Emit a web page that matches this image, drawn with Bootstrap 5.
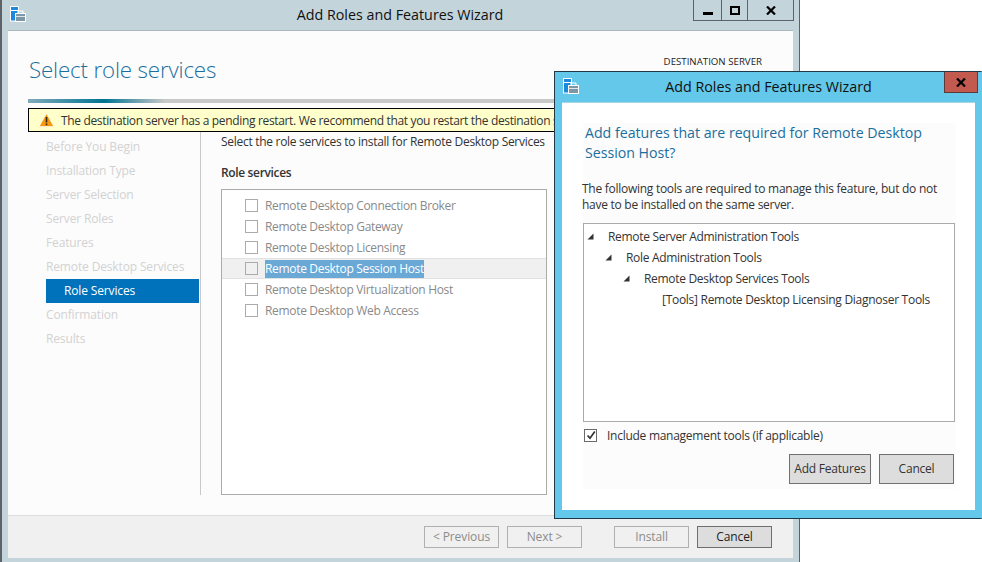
<!DOCTYPE html>
<html lang="en">
<head>
<meta charset="utf-8">
<title>Add Roles and Features Wizard</title>
<link href="https://cdn.jsdelivr.net/npm/bootstrap@5.3.0/dist/css/bootstrap.min.css" rel="stylesheet">
<style>
html,body{margin:0;height:100%;background:#fff;overflow:hidden}
body{font-family:"Open Sans","Noto Sans",sans-serif;font-size:12px;line-height:16px;color:#333;letter-spacing:-.34px}
.desk{position:relative;width:982px;height:562px;overflow:hidden}
.win-a{position:absolute;left:0;top:0;width:800px;height:562px;background:#c3d5db;border-left:2px solid #5c6268;border-right:1px solid #5c6268;padding:0 7px 4px 6px}
.win-b{position:absolute;left:554px;top:71px;width:428px;height:448px;background:#63c8ea;border:1px solid #1f3a46;border-right-color:#63c8ea;padding:0 6px 7px 7px}
.tbar-a{height:30px;position:relative;flex:none}
.tbar-b{height:30px;position:relative;flex:none}
.ttl{font-size:14.3px;line-height:30px;text-align:center;color:#111;letter-spacing:0}
.ico{position:absolute;left:2px;top:6px}
.tbar-b .ico{left:1px;top:6px}
.ctl{position:absolute;left:685px;top:0;height:21px;width:101px;border:1px solid #5c6268;border-top:0}
.ctl>span{display:flex;align-items:center;justify-content:center;height:100%;border-right:1px solid #5c6268}
.ctl>span:last-child{border-right:0}
.ctl-min{width:28px}
.ctl-max{width:26px}
.ctl-x{position:absolute;right:-3px;top:0;width:34px;height:21px;background:#c25a50;border:1px solid #5b3a3a;border-top:0}
.pane{width:785px;flex:1 1 auto;background:#fcfcfc;border-top:1px solid #a8b8be;min-height:0}
.pane-head{height:68px;padding-left:21px;padding-right:31px}
.heading{font-weight:300;font-size:22.3px;line-height:30px;color:#1a6f9e;letter-spacing:-.15px;padding-top:24px}
.dest{font-size:9.7px;line-height:12px;color:#222;padding-top:25px;letter-spacing:0}
.grad{height:4px;margin-left:20px;width:760px;background:linear-gradient(90deg,#7fabbc 0,#007392 10%,#c8c8c8 18%,#c8c8c8 100%)}
.warnbar{height:24px;margin:5px 0 0 20px;width:760px;background:#ffffcc;border:1px solid #000;padding-left:10px;white-space:nowrap;gap:7px}
.warnbar span{color:#333;padding-top:1px}
.cols{height:363px;margin-left:20px}
.steps{width:173px;border-right:1px solid #c9c9c9;padding:3px 0 0 18px;flex:none;letter-spacing:-.14px}
.step{height:24px;line-height:24px;color:#d2d2d2;white-space:nowrap}
.step-on{background:#0072bc;color:#fff;padding-left:18px;margin-right:1px}
.main-col{padding-left:20px;width:347px;flex:none}
.intro{height:18px;line-height:18px;margin-top:1px;white-space:nowrap;letter-spacing:-.29px}
.rs-lbl{font-weight:600;margin-top:13px;line-height:18px;height:18px;letter-spacing:-.35px}
.rs-box{height:306px;width:326px;border:1px solid #ababab;background:#fff;margin-top:7px;padding-top:5px;letter-spacing:-.32px}
.rs-row{height:21px;padding-left:23px;gap:7px;color:#8a8a8a;border:1px solid transparent;border-width:1px 0;white-space:nowrap}
.rs-row.pick{background:#f0f0f0;border-color:#e2e2e2}
.pick-t{background:#6aa8d6;color:#fff;padding:0;height:18px;line-height:17px}
.cb{width:13px;height:13px;border:1px solid #ababab;background:#fff;flex:none}
.pick .cb{background:#f0f0f0}
.cb-on{border-color:#6a6a6a;display:flex;align-items:center;justify-content:center}
.pane-foot{height:43px;flex:none;width:785px;background:#f0f0f0;border-top:1px solid #dcdcdc;padding-right:21px;padding-top:10px}
.wbtn{height:22px;width:75px;border:1px solid #b0b0b0;background:#f0f0f0;color:#8c8c8c;font-size:12px;line-height:18px;padding:0;letter-spacing:-.1px}
.wbtn-on{border-color:#6f6f6f;background:#dddddd;color:#222}
.gap-8{gap:8px}
.gap-32{margin-left:24px}
.d-pane{width:413px;height:408px;background:#fff;border-top:1px solid #a8d4e4;padding:20px 19px 0 21px}
.d-inner{background:#fcfcfc;height:366px;width:373px}
.d-h{font-size:14.2px;line-height:20px;color:#1a6f9e;padding:0 10px 0 2px;letter-spacing:-.02px}
.d-p{line-height:16px;margin-top:18px;margin-left:-1px;letter-spacing:-.27px}
.tree{height:199px;width:372px;margin-top:10px;background:#fff;border:1px solid #ababab;padding-top:2px;letter-spacing:-.31px}
.tr{height:21px;white-space:nowrap;color:#333}
.tw{width:20px;flex:none;display:flex;align-items:center;justify-content:center;padding-right:8px}
.tr-2{padding-left:18px}
.tr-3{padding-left:36px}
.tr-4{padding-left:78px;letter-spacing:-.28px}
.inc{height:14px;margin-top:6px;margin-left:1px;gap:10px;letter-spacing:-.27px}
.inc span:last-child{padding-top:1px}
.dbtns{margin-top:12px;padding-right:2px;gap:8px}
.dbtn{height:30px;border:1px solid #707070;background:#dddddd;color:#333;font-size:12px;padding:0;letter-spacing:-.22px}
.btn-add{width:82px}
.btn-can{width:75px}
.no-shrink{flex:none}
</style>
</head>
<body>
<div class="desk">
  <div class="win-a d-flex flex-column">
    <div class="tbar-a">
      <svg class="ico" width="17" height="16" viewBox="0 0 17 16"><rect x=".5" y=".5" width="8" height="14.500" fill="#1e88dd" stroke="#fff"/><path d="M.5 4.500h8" stroke="#fff"/><rect x="5.500" y="7.500" width="10" height="8" fill="#7e97a6" stroke="#fff"/><path d="M8 7.500v-2.500h5v2.500" fill="none" stroke="#fff"/><path d="M5.500 10.500h10" stroke="#dfe7ea"/></svg>
      <div class="ttl">Add Roles and Features Wizard</div>
      <div class="ctl d-flex">
        <span class="ctl-min"><svg width="10" height="10" viewBox="0 0 10 10"><path d="M0 7h10v3H0z" fill="#000"/></svg></span>
        <span class="ctl-max"><svg width="10" height="9" viewBox="0 0 10 9"><path d="M1 1h8v7H1z" fill="none" stroke="#000" stroke-width="2"/></svg></span>
        <span class="flex-grow-1"><svg width="10" height="9" viewBox="0 0 10 9"><path d="M1 .5l8 8M9 .5l-8 8" stroke="#000" stroke-width="2.200" fill="none"/></svg></span>
      </div>
    </div>
    <div class="pane d-flex flex-column">
      <div class="pane-head d-flex justify-content-between">
        <div class="heading">Select role services</div>
        <div class="dest">DESTINATION SERVER</div>
      </div>
      <div class="grad"></div>
      <div class="warnbar d-flex align-items-center overflow-hidden">
        <svg width="15" height="14" viewBox="0 0 15 14" class="no-shrink"><path d="M7.500 .5L14.800 13.500H.2z" fill="#f59a10" stroke="#fff" stroke-width=".6"/><path d="M6.700 4h1.600v5.500H6.700zM6.700 10.500h1.600v1.800H6.700z" fill="#3a2a10"/></svg>
        <span>The destination server has a pending restart. We recommend that you restart the destination server.</span>
      </div>
      <div class="cols d-flex">
        <div class="steps">
          <div class="step">Before You Begin</div>
          <div class="step">Installation Type</div>
          <div class="step">Server Selection</div>
          <div class="step">Server Roles</div>
          <div class="step">Features</div>
          <div class="step">Remote Desktop Services</div>
          <div class="step step-on">Role Services</div>
          <div class="step">Confirmation</div>
          <div class="step">Results</div>
        </div>
        <div class="main-col">
          <div class="intro">Select the role services to install for Remote Desktop Services</div>
          <div class="rs-lbl">Role services</div>
          <div class="rs-box">
            <div class="rs-row d-flex align-items-center"><span class="cb"></span><span>Remote Desktop Connection Broker</span></div>
            <div class="rs-row d-flex align-items-center"><span class="cb"></span><span>Remote Desktop Gateway</span></div>
            <div class="rs-row d-flex align-items-center"><span class="cb"></span><span>Remote Desktop Licensing</span></div>
            <div class="rs-row pick d-flex align-items-center"><span class="cb"></span><span class="pick-t">Remote Desktop Session Host</span></div>
            <div class="rs-row d-flex align-items-center"><span class="cb"></span><span>Remote Desktop Virtualization Host</span></div>
            <div class="rs-row d-flex align-items-center"><span class="cb"></span><span>Remote Desktop Web Access</span></div>
          </div>
        </div>
      </div>
    </div>
    <div class="pane-foot d-flex justify-content-end gap-8">
      <button type="button" class="wbtn">&lt; Previous</button>
      <button type="button" class="wbtn">Next &gt;</button>
      <button type="button" class="wbtn gap-32">Install</button>
      <button type="button" class="wbtn wbtn-on">Cancel</button>
    </div>
  </div>

  <div class="win-b d-flex flex-column">
    <div class="tbar-b">
      <svg class="ico" width="17" height="16" viewBox="0 0 17 16"><rect x=".5" y=".5" width="8" height="14.500" fill="#1e88dd" stroke="#fff"/><path d="M.5 4.500h8" stroke="#fff"/><rect x="5.500" y="7.500" width="10" height="8" fill="#7e97a6" stroke="#fff"/><path d="M8 7.500v-2.500h5v2.500" fill="none" stroke="#fff"/><path d="M5.500 10.500h10" stroke="#dfe7ea"/></svg>
      <div class="ttl">Add Roles and Features Wizard</div>
      <div class="ctl-x d-flex align-items-center justify-content-center"><svg width="10" height="9" viewBox="0 0 10 9"><path d="M1 .5l8 8M9 .5l-8 8" stroke="#000" stroke-width="2.200" fill="none"/></svg></div>
    </div>
    <div class="d-pane">
      <div class="d-inner">
        <div class="d-h">Add features that are required for Remote Desktop Session Host?</div>
        <div class="d-p">The following tools are required to manage this feature, but do not have to be installed on the same server.</div>
        <div class="tree">
          <div class="tr d-flex align-items-center"><span class="tw"><svg width="7" height="7" viewBox="0 0 7 7"><path d="M6.500 .5V6.500H.5z" fill="#333"/></svg></span><span class="ps-1">Remote Server Administration Tools</span></div>
          <div class="tr tr-2 d-flex align-items-center"><span class="tw"><svg width="7" height="7" viewBox="0 0 7 7"><path d="M6.500 .5V6.500H.5z" fill="#333"/></svg></span><span class="ps-1">Role Administration Tools</span></div>
          <div class="tr tr-3 d-flex align-items-center"><span class="tw"><svg width="7" height="7" viewBox="0 0 7 7"><path d="M6.500 .5V6.500H.5z" fill="#333"/></svg></span><span class="ps-1">Remote Desktop Services Tools</span></div>
          <div class="tr tr-4 d-flex align-items-center"><span>[Tools] Remote Desktop Licensing Diagnoser Tools</span></div>
        </div>
        <div class="inc d-flex align-items-center"><span class="cb cb-on"><svg width="10" height="10" viewBox="0 0 10 10"><path d="M1.500 5.500L4 8.200 8.800 1.500" fill="none" stroke="#333" stroke-width="1.700"/></svg></span><span>Include management tools (if applicable)</span></div>
        <div class="dbtns d-flex justify-content-end">
          <button type="button" class="dbtn btn-add">Add Features</button>
          <button type="button" class="dbtn btn-can">Cancel</button>
        </div>
      </div>
    </div>
  </div>
</div>
<script src="https://cdn.jsdelivr.net/npm/bootstrap@5.3.0/dist/js/bootstrap.bundle.min.js"></script>
</body>
</html>
